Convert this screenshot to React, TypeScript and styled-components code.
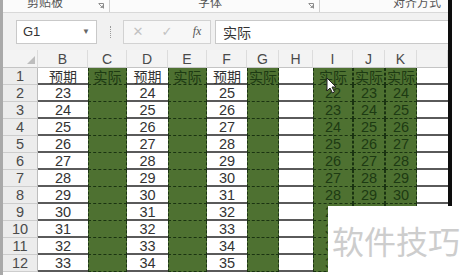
import styled, { createGlobalStyle } from 'styled-components';

const GlobalStyle = createGlobalStyle`
  body {
    margin: 0;
    background: #fff;
    font-family: "Liberation Sans", "Noto Sans CJK SC", sans-serif;
  }
`;

const Frame = styled.div`
  position: relative;
  display: flex;
  width: 469px;
  height: 275px;
  overflow: hidden;
  background: #fff;
`;

const Main = styled.div`
  width: 445px;
  border-left: 3px solid #a9a9a9;
  display: flex;
  flex-direction: column;
`;

const EdgeBar = styled.div`
  width: 4px;
  background: #0d0d0d;
`;

/* ribbon labels, cut off at the top */
const Ribbon = styled.div`
  display: flex;
  height: 12px;
  overflow: hidden;
  background: #fbfbfb;
  border-bottom: 1px solid #d8d8d8;
`;

const RibbonGroup = styled.div<{ $w: number; $pad: number; $sep?: boolean }>`
  width: ${(p) => p.$w}px;
  flex-shrink: 0;
  display: flex;
  align-items: flex-end;
  box-sizing: border-box;
  padding-left: ${(p) => p.$pad}px;
  border-right: ${(p) => (p.$sep ? '1px solid #cfcfcf' : 'none')};
`;

const RibbonLabel = styled.span`
  flex: 1;
  height: 16px;
  line-height: 16px;
  margin-bottom: 2px;
  font-family: "Noto Sans CJK SC", sans-serif;
  font-size: 12px;
  color: #555;
  flex-shrink: 0;
`;

const Launcher = styled.svg`
  width: 6px;
  height: 6px;
  margin: 0 5px 3px 0;
  flex-shrink: 0;
`;

const FormulaBar = styled.div`
  height: 37px;
  background: #f1f1f1;
  display: flex;
  align-items: center;
  padding-left: 13px;
`;

const NameBox = styled.div`
  width: 81px;
  height: 24px;
  box-sizing: border-box;
  background: #fff;
  border: 1px solid #c9c9c9;
  display: flex;
  align-items: center;
  justify-content: space-between;
  padding: 0 6px 0 6px;
  font-size: 13px;
  color: #333;
`;

const Caret = styled.span`
  font-size: 8px;
  color: #666;
`;

const Dots = styled.div`
  width: 1px;
  height: 12px;
  margin: 0 11px 0 13px;
  border-left: 1px dotted #9a9a9a;
`;

const ButtonBox = styled.div`
  width: 88px;
  height: 24px;
  box-sizing: border-box;
  background: #f7f7f7;
  border: 1px solid #d2d2d2;
  display: grid;
  grid-template-columns: 28px 30px 30px;
  align-items: center;
  justify-items: center;
`;

const FxButton = styled.span<{ $dim?: boolean }>`
  font-size: ${(p) => (p.$dim ? '13px' : '12px')};
  color: ${(p) => (p.$dim ? '#c2c2c2' : '#555')};
  font-family: ${(p) => (p.$dim ? '"DejaVu Sans", sans-serif' : '"Liberation Serif", serif')};
  font-style: ${(p) => (p.$dim ? 'normal' : 'italic')};
`;

const FormulaInput = styled.div`
  flex: 1;
  height: 24px;
  margin-left: 4px;
  box-sizing: border-box;
  background: #fff;
  border: 1px solid #c9c9c9;
  border-right: none;
  display: flex;
  align-items: center;
  padding-left: 7px;
  font-family: "Noto Sans CJK SC", sans-serif;
  font-size: 14px;
  color: #333;
`;

const Sheet = styled.div`
  display: grid;
  grid-template-columns: 35px 50px 39px 41px 39px 40px 32px 34px 40px 32px 32px 31px;
  grid-template-rows: 18px repeat(12, 17px);
`;

const ColHead = styled.div`
  box-sizing: border-box;
  background: #f3f3f3;
  border-right: 1px solid #dcdcdc;
  border-bottom: 1px solid #c4c4c4;
  display: flex;
  align-items: center;
  justify-content: center;
  font-size: 14px;
  color: #4a4a4a;
`;

const Corner = styled(ColHead)`
  justify-content: flex-end;
  align-items: flex-end;
  padding: 0 2px 3px 0;
`;

const RowHead = styled.div`
  box-sizing: border-box;
  background: #ececec;
  border-right: 1px solid #bdbdbd;
  border-bottom: 1px solid #cdcdcd;
  display: flex;
  align-items: center;
  justify-content: center;
  font-size: 14.5px;
  color: #4a4a4a;
`;

const Cell = styled.div<{ $green?: boolean }>`
  box-sizing: border-box;
  display: flex;
  align-items: center;
  justify-content: center;
  font-size: 14.5px;
  background: ${(p) => (p.$green ? '#4e7131' : '#fff')};
  color: ${(p) => (p.$green ? '#1d3a13' : '#333')};
  border-bottom: ${(p) => (p.$green ? '1px dashed #1a3311' : '2px solid #5a5a5a')};
  border-right: ${(p) => (p.$green ? '1px dashed #1a3311' : 'none')};
  border-left: ${(p) => (p.$green ? '1px dashed #1a3311' : 'none')};
`;

const CjkText = styled.span`
  font-family: "Noto Sans CJK SC", sans-serif;
  font-size: 14px;
`;

const Watermark = styled.div`
  position: absolute;
  left: 328px;
  top: 206px;
  right: 0;
  bottom: 0;
  background: #fff;
  padding: 14px 0 0 4px;
  font-family: "Noto Sans CJK SC", sans-serif;
  font-size: 32px;
  line-height: 40px;
  color: #cdcdcd;
  white-space: nowrap;
`;

const Cursor = styled.svg`
  position: absolute;
  left: 326px;
  top: 77px;
  width: 11px;
  height: 17px;
`;

const columns = ['B', 'C', 'D', 'E', 'F', 'G', 'H', 'I', 'J', 'K', ''];
const greenCols = ['C', 'E', 'G', 'I', 'J', 'K'];
const rows = Array.from({ length: 12 }, (_, i) => i + 1);

const cellText = (col: string, r: number): string => {
  if (r === 1) {
    if (col === 'B' || col === 'D' || col === 'F') return '预期';
    if (greenCols.includes(col)) return '实际';
    return '';
  }
  const starts: Record<string, number> = { B: 21, D: 22, F: 23, I: 20, J: 21, K: 22 };
  return col in starts ? String(starts[col] + r) : '';
};

const LauncherIcon = () => (
  <Launcher viewBox="0 0 6 6">
    <path d="M0.5 0.5H5.5V5.5" fill="none" stroke="#8a8a8a" strokeWidth="1" />
    <path d="M1 1L4.5 4.5M2.5 4.5H4.5V2.5" fill="none" stroke="#8a8a8a" strokeWidth="0.9" />
  </Launcher>
);

const App = () => (
  <Frame>
    <GlobalStyle />
    <Main>
      <Ribbon>
        <RibbonGroup $w={107} $pad={24} $sep>
          <RibbonLabel>剪贴板</RibbonLabel>
          <LauncherIcon />
        </RibbonGroup>
        <RibbonGroup $w={210} $pad={88} $sep>
          <RibbonLabel>字体</RibbonLabel>
          <LauncherIcon />
        </RibbonGroup>
        <RibbonGroup $w={128} $pad={73}>
          <RibbonLabel>对齐方式</RibbonLabel>
        </RibbonGroup>
      </Ribbon>

      <FormulaBar>
        <NameBox>
          G1
          <Caret>▼</Caret>
        </NameBox>
        <Dots />
        <ButtonBox>
          <FxButton $dim>✕</FxButton>
          <FxButton $dim>✓</FxButton>
          <FxButton>fx</FxButton>
        </ButtonBox>
        <FormulaInput>实际</FormulaInput>
      </FormulaBar>

      <Sheet>
        <Corner>
          <svg width="8" height="8" viewBox="0 0 8 8">
            <path d="M8 0V8H0Z" fill="#bdbdbd" />
          </svg>
        </Corner>
        {columns.map((c, i) => (
          <ColHead key={`h${i}`}>{c}</ColHead>
        ))}
        {rows.map((r) => [
          <RowHead key={`r${r}`}>{r}</RowHead>,
          ...columns.map((c, i) => {
            const text = cellText(c, r);
            return (
              <Cell key={`${r}-${i}`} $green={greenCols.includes(c)}>
                {r === 1 ? <CjkText>{text}</CjkText> : text}
              </Cell>
            );
          }),
        ])}
      </Sheet>
    </Main>
    <EdgeBar />

    <Cursor viewBox="0 0 11 17">
      <path
        d="M1 1V14L4 11L6.5 16L8.5 15L6 10H10Z"
        fill="#fff"
        stroke="#222"
        strokeWidth="1"
        strokeLinejoin="round"
      />
    </Cursor>

    <Watermark>软件技巧</Watermark>
  </Frame>
);

export default App;
